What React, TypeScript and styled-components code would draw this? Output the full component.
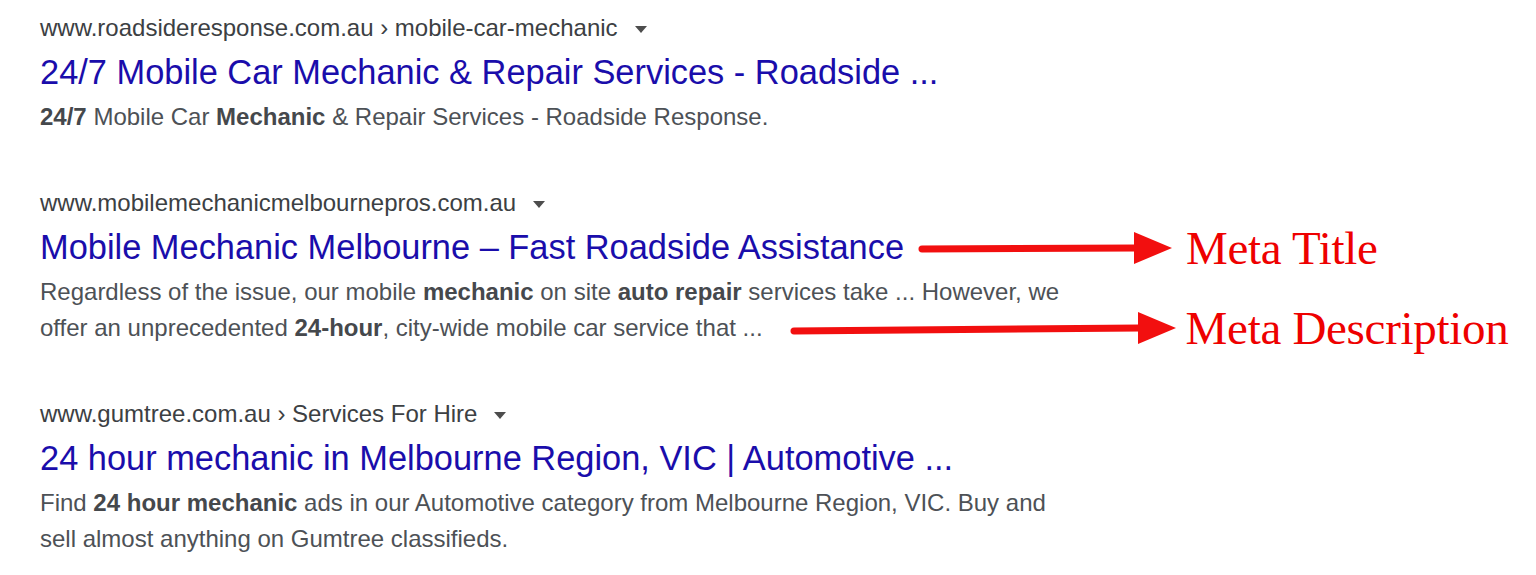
import React from 'react'
import styled, { createGlobalStyle } from 'styled-components'

const GlobalStyle = createGlobalStyle`
  body {
    margin: 0;
    background: #ffffff;
    font-family: 'Liberation Sans', Arial, sans-serif;
  }
`

const Page = styled.div`
  width: 1536px;
  height: 575px;
  overflow: hidden;
  padding: 6px 0 0 40px;
  box-sizing: border-box;
  display: flex;
  flex-direction: column;
  gap: 46px;
`

const Result = styled.div`
  display: flex;
  flex-direction: column;
`

const UrlLine = styled.div`
  display: flex;
  align-items: center;
  height: 44px;
  font-size: 24px;
  color: #3c4043;
  white-space: nowrap;
`

const Caret = styled.span`
  margin-left: 17px;
  margin-top: 2px;
  width: 0;
  height: 0;
  border-left: 6px solid transparent;
  border-right: 6px solid transparent;
  border-top: 7px solid #4d4d4d;
`

const TitleRow = styled.div`
  display: flex;
  align-items: center;
  height: 45px;
  white-space: nowrap;
`

const Title = styled.a`
  font-size: 34.4px;
  color: #1a0dab;
  text-decoration: none;
`

const Snippet = styled.div`
  margin-top: 4px;
  font-size: 24px;
  line-height: 36px;
  color: #4d5156;

  b {
    color: #45484c;
    font-weight: 700;
  }
`

const SnippetLine = styled.div`
  display: flex;
  align-items: center;
  white-space: pre;
  height: 36px;
`

const Arrow = styled.svg<{ $gap: number }>`
  margin-left: ${({ $gap }) => $gap}px;
  flex: none;
  overflow: visible;
`

const Label = styled.span<{ $gap: number }>`
  margin-left: ${({ $gap }) => $gap}px;
  font-family: 'Liberation Serif', 'Times New Roman', serif;
  font-size: 47px;
  line-height: 36px;
  color: #ee0000;
  letter-spacing: -0.3px;
  white-space: nowrap;
`

const RedArrow = ({ length, gap, tilt = 0 }: { length: number; gap: number; tilt?: number }) => (
  <Arrow $gap={gap} width={length} height={32} viewBox={`0 0 ${length} 32`}>
    <line x1={3} y1={16 + tilt} x2={length - 36} y2={16} stroke="#f20f0f" strokeWidth={7} strokeLinecap="round" />
    <polygon points={`${length - 38},0 ${length},16 ${length - 38},32`} fill="#f20f0f" />
  </Arrow>
)

const App = () => (
  <>
    <GlobalStyle />
    <Page>
      <Result>
        <UrlLine>
          www.roadsideresponse.com.au › mobile-car-mechanic
          <Caret />
        </UrlLine>
        <TitleRow>
          <Title href="#">24/7 Mobile Car Mechanic &amp; Repair Services - Roadside ...</Title>
        </TitleRow>
        <Snippet>
          <SnippetLine>
            <b>24/7</b> Mobile Car <b>Mechanic</b> &amp; Repair Services - Roadside Response.
          </SnippetLine>
        </Snippet>
      </Result>

      <Result>
        <UrlLine>
          www.mobilemechanicmelbournepros.com.au
          <Caret />
        </UrlLine>
        <TitleRow>
          <Title href="#">Mobile Mechanic Melbourne – Fast Roadside Assistance</Title>
          <RedArrow length={253} gap={15} tilt={1} />
          <Label $gap={14}>Meta Title</Label>
        </TitleRow>
        <Snippet>
          <SnippetLine>
            Regardless of the issue, our mobile <b>mechanic</b> on site <b>auto repair</b> services take ... However, we
          </SnippetLine>
          <SnippetLine>
            offer an unprecedented <b>24-hour</b>, city-wide mobile car service that ...
            <RedArrow length={385} gap={28} tilt={3} />
            <Label $gap={10}>Meta Description</Label>
          </SnippetLine>
        </Snippet>
      </Result>

      <Result>
        <UrlLine>
          www.gumtree.com.au › Services For Hire
          <Caret />
        </UrlLine>
        <TitleRow>
          <Title href="#">24 hour mechanic in Melbourne Region, VIC | Automotive ...</Title>
        </TitleRow>
        <Snippet>
          <SnippetLine>
            Find <b>24 hour mechanic</b> ads in our Automotive category from Melbourne Region, VIC. Buy and
          </SnippetLine>
          <SnippetLine>sell almost anything on Gumtree classifieds.</SnippetLine>
        </Snippet>
      </Result>
    </Page>
  </>
)

export default App
